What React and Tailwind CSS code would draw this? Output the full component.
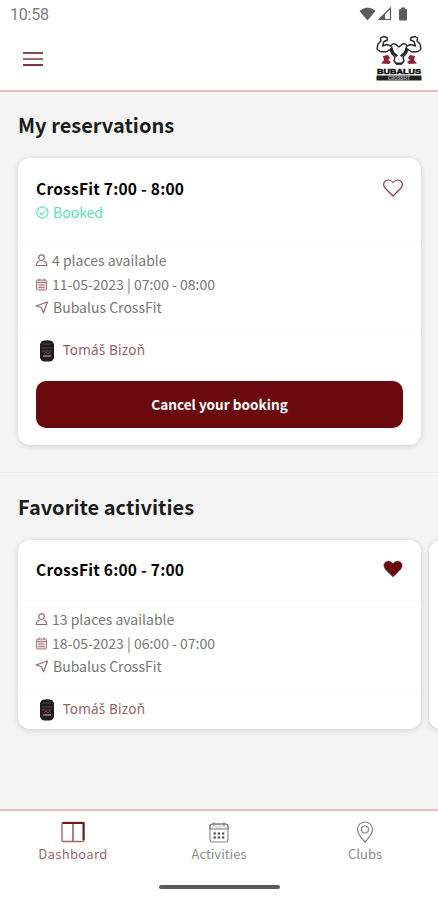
import React from "react";

const reservation = {
  title: "CrossFit 7:00 - 8:00",
  places: "4 places available",
  date: "11-05-2023 | 07:00 - 08:00",
  club: "Bubalus CrossFit",
  trainer: "Tomáš Bizoň",
};

const favorite = {
  title: "CrossFit 6:00 - 7:00",
  places: "13 places available",
  date: "18-05-2023 | 06:00 - 07:00",
  club: "Bubalus CrossFit",
  trainer: "Tomáš Bizoň",
};

export default function App() {
  return (
    <div className="flex h-[900px] w-[438px] flex-col overflow-hidden bg-[#f4f4f4] font-['Noto_Sans_CJK_SC','Noto_Sans',sans-serif] text-[#1c1c1c]">
      <Header />

      <main className="flex-1 overflow-hidden">
        <section className="h-[381px] border-b border-[#e9e9e9] px-[18px] pt-[18px]">
          <SectionTitle>My reservations</SectionTitle>
          <ActivityCard {...reservation} booked />
        </section>

        <section className="pl-[18px] pt-[19px]">
          <SectionTitle>Favorite activities</SectionTitle>
          <div className="flex gap-2">
            <ActivityCard {...favorite} liked />
            <div className="h-[189px] w-[403px] shrink-0 rounded-xl bg-white shadow-[0_1px_6px_rgba(0,0,0,0.16)]" />
          </div>
        </section>
      </main>

      <BottomNav />
    </div>
  );
}

/* ===========================
      HEADER
=========================== */
function Header() {
  return (
    <header className="h-[92px] shrink-0 border-b-2 border-[#e9bcbc] bg-white">
      <div className="flex h-7 items-center justify-between pl-[10px] pr-[29px]">
        <span className="pt-0.5 font-[Roboto] text-[16px] leading-none tracking-[-0.2px] text-[#808080]">10:58</span>
        <div className="flex items-center text-[#5c5c5c]">
          <svg width="17" height="14" viewBox="0 0 17 14" fill="currentColor">
            <path d="M0.5 4Q8.5-3 16.500 4L8.500 13.500Z" />
          </svg>
          <svg width="14" height="14" viewBox="0 0 14 14" className="ml-0.5">
            <path d="M1 12.500L12.500 1V12.500Z" fill="none" stroke="currentColor" strokeWidth="1.200" />
            <path d="M1 12.500L7 6.500V12.500Z" fill="currentColor" />
          </svg>
          <svg width="10" height="14" viewBox="0 0 10 14" fill="currentColor" className="ml-[6px] mr-px">
            <path d="M3 0.500H7V2H8Q9 2 9 3V12.500Q9 13.500 8 13.500H2Q1 13.500 1 12.500V3Q1 2 2 2H3Z" />
          </svg>
        </div>
      </div>
      <div className="flex h-[62px] items-center justify-between pl-[23px] pr-[16px]">
        <div className="flex w-5 flex-col gap-1">
          <span className="h-[2px] bg-[#874b52]" />
          <span className="h-[2px] bg-[#9c6c72]" />
          <span className="h-[2px] bg-[#7c3840]" />
        </div>
        <Logo />
      </div>
    </header>
  );
}

function Logo() {
  return (
    <svg width="46" height="48" viewBox="0 0 46 48">
      {/* arms */}
      <g fill="none" stroke="#2b2b2b" strokeWidth="1.400" strokeLinejoin="round" strokeLinecap="round">
        <path d="M7 1.500L4.500 3L5 6L2 9L1 14L4 16.500L10 17L14 14.500M7 1.500L11 2.500L11.500 5L8 6.500L6.500 11L11 9.500L15 11" />
        <path d="M39 1.500L41.500 3L41 6L44 9L45 14L42 16.500L36 17L32 14.500M39 1.500L35 2.500L34.500 5L38 6.500L39.500 11L35 9.500L31 11" />
        <path d="M15 11Q17 7.500 20 9.500L23 12L26 9.500Q29 7.500 31 11" />
        <path d="M14 14.500L16 19L19 22L18 26L20.500 29H25.500L28 26L27 22L30 19L32 14.500" />
      </g>
      <path d="M16 11L18 17L22 20.500L20.500 22L16 18.500L14 14ZM30 11L28 17L24 20.500L25.500 22L30 18.500L32 14Z" fill="#222" />
      <path d="M18.500 25.500L20.500 27.500H25.500L27.500 25.500L25.500 29.500H20.500Z" fill="#222" />
      {/* gloves */}
      <path d="M7 21L12 20L14 23L12 25L15 27L13 29L5 28.500L8 25Z" fill="#8e2432" />
      <path d="M39 21L34 20L32 23L34 25L31 27L33 29L41 28.500L38 25Z" fill="#8e2432" />
      <text x="1" y="38.800" fontFamily="Liberation Sans" fontWeight="700" fontSize="7" textLength="44" lengthAdjust="spacingAndGlyphs" fill="#111" stroke="#111" strokeWidth="0.500">
        BUBALUS
      </text>
      <rect x="0.500" y="40.500" width="45" height="5" fill="#222" />
      <text x="12" y="44.800" fontFamily="Liberation Sans" fontWeight="700" fontSize="4.500" textLength="22" lengthAdjust="spacingAndGlyphs" fill="#bbb">
        CROSSFIT
      </text>
    </svg>
  );
}

function SectionTitle({ children }) {
  return <h2 className="h-[48px] text-[20px] font-bold leading-[30px] tracking-[0.02px] whitespace-nowrap">{children}</h2>;
}

/* ===========================
      ACTIVITY CARD
=========================== */
function ActivityCard({ title, places, date, club, trainer, booked, liked }) {
  return (
    <article
      className={`w-[403px] shrink-0 rounded-xl bg-white shadow-[0_1px_6px_rgba(0,0,0,0.16)] ${
        booked ? "h-[287px]" : "h-[189px]"
      }`}
    >
      <div className={`flex justify-between border-b border-[#fafafa] px-[18px] ${booked ? "h-[84px] pt-[18px]" : "h-[61px] pt-[17px]"}`}>
        <div>
          <h3 className="text-[15.5px] font-bold leading-6 tracking-[0.25px] whitespace-nowrap text-black">{title}</h3>
          {booked && (
            <p className="flex items-center gap-1 text-[14px] leading-6 text-[#5de0b2]">
              <svg width="13" height="13" viewBox="0 0 13 13" fill="none" stroke="currentColor" strokeWidth="1.100">
                <circle cx="6.500" cy="6.500" r="5.600" />
                <path d="M3.500 6.500L5.700 8.700L9.500 4.500" />
              </svg>
              Booked
            </p>
          )}
        </div>
        <svg width="20" height="18" viewBox="0 0 20 18" className="mt-[3px]" fill={liked ? "#6b0a0e" : "none"} stroke={liked ? "#6b0a0e" : "#7b3d46"} strokeWidth={liked ? "0.3" : "1.2"}>
          <path d="M10 17L2 9Q0 6.500 1 3.800Q2.500 1 5.500 1Q8 1 10 3.500Q12 1 14.500 1Q17.500 1 19 3.800Q20 6.500 18 9Z" strokeLinejoin="round" />
        </svg>
      </div>

      <div className="h-[89px] px-[17px] pt-[7px] text-[14px] leading-[23.5px] text-[#777]">
        <InfoRow icon={<UserIcon />}>{places}</InfoRow>
        <InfoRow icon={<CalendarIcon />}>{date}</InfoRow>
        <InfoRow icon={<SendIcon />}>{club}</InfoRow>
      </div>

      <div className="flex h-[38px] items-center gap-2 border-t border-[#fcfcfc] pl-[21px]">
        <Avatar />
        <span className="font-['Noto_Sans',sans-serif] text-[13.5px] tracking-[0.2px] text-[#8f636a]">{trainer}</span>
      </div>

      {booked && (
        <button className="mx-[18px] mt-[12px] block h-[47px] w-[367px] rounded-[10px] bg-[#6b0a0e] text-[13.6px] font-bold text-white">
          Cancel your booking
        </button>
      )}
    </article>
  );
}

function InfoRow({ icon, children }) {
  return (
    <div className="flex h-[23.5px] items-center gap-1 whitespace-nowrap">
      {icon}
      <span>{children}</span>
    </div>
  );
}

function UserIcon() {
  return (
    <svg width="13" height="13" viewBox="0 0 13 13" fill="none" stroke="#97666d" strokeWidth="1.200">
      <circle cx="6.500" cy="3.700" r="2.800" />
      <path d="M4.500 7Q1.500 7.700 1.300 11.500H11.700Q11.500 7.700 8.500 7" />
    </svg>
  );
}

function CalendarIcon() {
  return (
    <svg width="13" height="13" viewBox="0 0 13 13" fill="none" stroke="#a67b81">
      <rect x="1.500" y="2" width="10" height="10" rx="1" fill="#ead9db" />
      <path d="M1.500 4.500H11.500M4 0.500V3M9 0.500V3M3.500 7H9.500M3.500 9.500H9.500" />
    </svg>
  );
}

function SendIcon() {
  return (
    <svg width="14" height="13" viewBox="0 0 14 13" fill="none" stroke="#97666d" strokeWidth="1.200" strokeLinejoin="round">
      <path d="M12.500 1L1 5L6.300 6.500L8.500 11.800Z" />
    </svg>
  );
}

function Avatar() {
  return (
    <svg width="16" height="22" viewBox="0 0 16 22">
      <path d="M3 1Q8-0.500 13 1L15 4V18L13 21Q8 22 3 21L1 18V4Z" fill="#211c1d" />
      <path d="M4 4H12M3 8H13M3 11H13" stroke="#504547" />
      <path d="M5 14L7 12L9 14L11 12" stroke="#8b4743" fill="none" />
      <path d="M4 16H12" stroke="#a77f77" strokeWidth="1.500" />
    </svg>
  );
}

/* ===========================
      BOTTOM NAV
=========================== */
function BottomNav() {
  return (
    <nav className="flex h-[91px] shrink-0 flex-col items-center border-t-2 border-[#e9bcbc] bg-white">
      <div className="grid h-[74px] w-full grid-cols-3 text-[13px] text-[#8c8c8c]">
        <NavItem label="Dashboard" active>
          <svg width="24" height="22" viewBox="0 0 24 22" fill="none" stroke="#a0666c" strokeWidth="1.400">
            <rect x="1" y="1.500" width="22" height="19" rx="1.500" />
            <path d="M12 2V20" stroke="#8d4b51" />
            <path d="M1.500 2H22.500V19" stroke="#6f1a22" strokeWidth="2" />
          </svg>
        </NavItem>
        <NavItem label="Activities">
          <svg width="22" height="22" viewBox="0 0 22 22" fill="none" stroke="#858585" strokeWidth="1.100">
            <path d="M2 8V5.500Q2 3 4.500 3H17.500Q20 3 20 5.500V8Z" fill="#e6e6e6" />
            <rect x="2" y="3" width="18" height="18" rx="2.500" />
            <path d="M6 1V5M16 1V5" />
            <path d="M5.500 12.500H16.500M5.500 16.500H16.500" stroke="#444" strokeWidth="2.200" strokeDasharray="2.400 1.800" />
          </svg>
        </NavItem>
        <NavItem label="Clubs">
          <svg width="18" height="22" viewBox="0 0 18 22" fill="none" stroke="#858585" strokeWidth="1.200">
            <path d="M9 21Q1.500 13 1.500 8.500A7.500 7.500 0 0 1 16.500 8.500Q16.500 13 9 21Z" />
            <circle cx="9" cy="8.500" r="3.500" />
          </svg>
        </NavItem>
      </div>
      <div className="h-1 w-[121px] rounded-full bg-[#5b5b5b]" />
    </nav>
  );
}

function NavItem({ label, active, children }) {
  return (
    <div className="flex flex-col items-center pt-[10px]">
      {children}
      <span className={`leading-[21px] ${active ? "tracking-[0.35px] text-[#966a70]" : ""}`}>{label}</span>
    </div>
  );
}
